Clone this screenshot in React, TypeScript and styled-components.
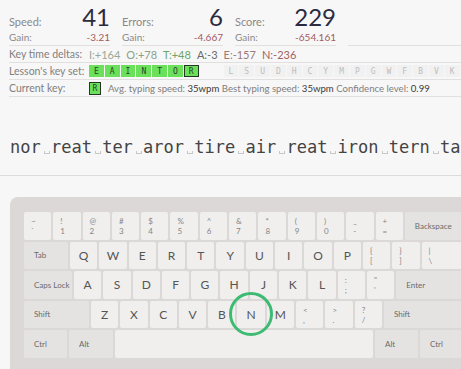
import React from 'react';
import styled, { createGlobalStyle } from 'styled-components';

const Global = createGlobalStyle`
  html, body { margin: 0; padding: 0; background: #f8f7f7; overflow: hidden; }
  body { font-family: Lato, "Noto Sans", sans-serif; }
`;

const Page = styled.div`
  width: 461px;
  height: 369px;
  overflow: hidden;
  background: #f8f7f7;
`;

const Stats = styled.div`
  display: flex;
  gap: 12px;
  padding-left: 9px;
`;

const Stat = styled.div`
  width: 101px;
  flex-shrink: 0;
`;

const StatTop = styled.div`
  display: flex;
  justify-content: space-between;
  align-items: baseline;
  padding-top: 5px;
`;

const StatLabel = styled.span`
  font-size: 11px;
  color: #8a8888;
`;

const BigNum = styled.span`
  font-size: 24px;
  line-height: 24px;
  color: #2b2b40;
`;

const GainRow = styled.div`
  display: flex;
  justify-content: space-between;
  align-items: center;
  height: 16px;
  border-bottom: 1px solid #e2dfdf;
  font-size: 10px;
  color: #8a8888;
`;

const GainValue = styled.span`
  color: #a35a5e;
`;

const Filler = styled.div`
  flex: 1;
  align-self: flex-end;
  border-bottom: 1px solid #e2dfdf;
`;

const InfoRow = styled.div`
  display: flex;
  align-items: center;
  height: 16px;
  margin-left: 9px;
  border-bottom: 1px solid #e2dfdf;
  font-size: 10.5px;
  color: #808080;
  white-space: nowrap;
`;

const InfoLabel = styled.span`
  width: 80px;
  flex-shrink: 0;
`;

const Delta = styled.span<{ $c: string }>`
  color: ${(p) => p.$c};
  margin-right: 6px;
  font-size: 11px;
`;

const KeyBox = styled.span<{ $state: 'on' | 'current' | 'off' }>`
  display: inline-flex;
  align-items: center;
  justify-content: center;
  box-sizing: border-box;
  width: 14.8px;
  height: 12px;
  margin-right: 1px;
  font-family: "DejaVu Sans Mono", monospace;
  font-size: 8px;
  background: ${(p) => (p.$state === 'off' ? '#f2f1f1' : '#6be05a')};
  color: ${(p) => (p.$state === 'off' ? '#bdbdbd' : '#2a432a')};
  border: ${(p) => (p.$state === 'current' ? '1.5px solid #263626' : 'none')};
`;

const KeyGap = styled.span`
  display: inline-block;
  width: 24px;
`;

const CurrentBox = styled(KeyBox)`
  width: 12px;
  height: 13px;
`;

const InfoText = styled.span`
  margin-left: 6px;
  font-size: 9.6px;
  color: #7e7e7e;
`;

const Strong = styled.span`
  color: #3a3a3a;
`;

const TypingArea = styled.div`
  padding: 40px 0 18px 10px;
  border-bottom: 1px solid #dedbdb;
  white-space: nowrap;
  overflow: hidden;
  font-family: "DejaVu Sans Mono", monospace;
  font-size: 17px;
  line-height: 20px;
  color: #444;
`;

const SpaceMark = styled.span`
  position: relative;
  display: inline-block;
  width: 1ch;
  &::after {
    content: '';
    position: absolute;
    left: 3px;
    bottom: 3px;
    width: 4px;
    height: 2px;
    border: 1px solid #c8c8c8;
    border-top: none;
  }
`;

const Panel = styled.div`
  margin: 21px 0 0 10px;
  padding: 15px 0 12px 14px;
  width: 480px;
  background: #dcd8d7;
  border-radius: 8px 0 0 0;
  display: flex;
  flex-direction: column;
  gap: 2px;
`;

const KeyRow = styled.div`
  display: flex;
  gap: 2px;
`;

const Key = styled.div<{ $w: number; $mod?: boolean; $target?: boolean }>`
  position: relative;
  z-index: ${(p) => (p.$target ? 2 : 'auto')};
  flex-shrink: 0;
  box-sizing: border-box;
  width: ${(p) => p.$w}px;
  height: 27.5px;
  border-radius: 2px;
  background: ${(p) => (p.$mod ? '#e5e3e2' : '#f0efee')};
  color: #555;
  &::after {
    content: '';
    display: ${(p) => (p.$target ? 'block' : 'none')};
    position: absolute;
    left: 50%;
    top: 50%;
    width: 44px;
    height: 44px;
    box-sizing: border-box;
    border: 3.5px solid #3dbb72;
    border-radius: 50%;
    transform: translate(-50%, -50%);
  }
`;

const CharLabel = styled.div`
  display: flex;
  align-items: center;
  justify-content: center;
  height: 100%;
  font-size: 12px;
  color: #555;
`;

const DualLabel = styled.div`
  display: flex;
  flex-direction: column;
  padding: 4px 0 0 7px;
  font-size: 8px;
  line-height: 10px;
  color: #858585;
`;

const ModLabel = styled.div`
  display: flex;
  align-items: center;
  height: 100%;
  padding-left: 10px;
  font-size: 8px;
  color: #6a6a6a;
`;

type K =
  | { t: 'c'; l: string; target?: boolean }
  | { t: 'd'; a: string; b: string; w?: number }
  | { t: 'm'; l: string; w: number }
  | { t: 's'; w: number };

const U = 27.3;

const rows: K[][] = [
  [
    { t: 'd', a: '~', b: '`' },
    { t: 'd', a: '!', b: '1' },
    { t: 'd', a: '@', b: '2' },
    { t: 'd', a: '#', b: '3' },
    { t: 'd', a: '$', b: '4' },
    { t: 'd', a: '%', b: '5' },
    { t: 'd', a: '^', b: '6' },
    { t: 'd', a: '&', b: '7' },
    { t: 'd', a: '*', b: '8' },
    { t: 'd', a: '(', b: '9' },
    { t: 'd', a: ')', b: '0' },
    { t: 'd', a: '_', b: '-' },
    { t: 'd', a: '+', b: '=' },
    { t: 'm', l: 'Backspace', w: 57 },
  ],
  [
    { t: 'm', l: 'Tab', w: 44 },
    ...'QWERTYUIOP'.split('').map((l) => ({ t: 'c', l } as K)),
    { t: 'd', a: '{', b: '[' },
    { t: 'd', a: '}', b: ']' },
    { t: 'd', a: '|', b: '\\', w: 42 },
  ],
  [
    { t: 'm', l: 'Caps Lock', w: 48 },
    ...'ASDFGHJKL'.split('').map((l) => ({ t: 'c', l } as K)),
    { t: 'd', a: ':', b: ';' },
    { t: 'd', a: '"', b: "'" },
    { t: 'm', l: 'Enter', w: 67 },
  ],
  [
    { t: 'm', l: 'Shift', w: 65 },
    ...'ZXCVBNM'.split('').map((l) => ({ t: 'c', l, target: l === 'N' } as K)),
    { t: 'd', a: '<', b: ',' },
    { t: 'd', a: '>', b: '.' },
    { t: 'd', a: '?', b: '/' },
    { t: 'm', l: 'Shift', w: 80 },
  ],
  [
    { t: 'm', l: 'Ctrl', w: 43 },
    { t: 'm', l: 'Alt', w: 44 },
    { t: 's', w: 258 },
    { t: 'm', l: 'Alt', w: 43 },
    { t: 'm', l: 'Ctrl', w: 44 },
  ],
];

const renderKey = (k: K, i: number) => {
  switch (k.t) {
    case 'c':
      return (
        <Key key={i} $w={U} $target={k.target}>
          <CharLabel>{k.l}</CharLabel>
        </Key>
      );
    case 'd':
      return (
        <Key key={i} $w={k.w ?? U}>
          <DualLabel>
            <span>{k.a}</span>
            <span>{k.b}</span>
          </DualLabel>
        </Key>
      );
    case 'm':
      return (
        <Key key={i} $w={k.w} $mod>
          <ModLabel>{k.l}</ModLabel>
        </Key>
      );
    default:
      return <Key key={i} $w={k.w} />;
  }
};

const stats = [
  { label: 'Speed:', value: '41', gain: '-3.21' },
  { label: 'Errors:', value: '6', gain: '-4.667' },
  { label: 'Score:', value: '229', gain: '-654.161' },
];

const deltas = [
  { t: 'I:+164', c: '#98a898' },
  { t: 'O:+78', c: '#8aa28a' },
  { t: 'T:+48', c: '#6aa66a' },
  { t: 'A:-3', c: '#6a6a6a' },
  { t: 'E:-157', c: '#9a7a7a' },
  { t: 'N:-236', c: '#a06262' },
];

const words = ['nor', 'reat', 'ter', 'aror', 'tire', 'air', 'reat', 'iron', 'tern', 'ta'];

export default function App() {
  return (
    <Page>
      <Global />
      <Stats>
        {stats.map((s) => (
          <Stat key={s.label}>
            <StatTop>
              <StatLabel>{s.label}</StatLabel>
              <BigNum>{s.value}</BigNum>
            </StatTop>
            <GainRow>
              <span>Gain:</span>
              <GainValue>{s.gain}</GainValue>
            </GainRow>
          </Stat>
        ))}
        <Filler />
      </Stats>
      <InfoRow>
        <InfoLabel>Key time deltas:</InfoLabel>
        {deltas.map((d) => (
          <Delta key={d.t} $c={d.c}>
            {d.t}
          </Delta>
        ))}
      </InfoRow>
      <InfoRow>
        <InfoLabel>Lesson's key set:</InfoLabel>
        {'EAINTO'.split('').map((l) => (
          <KeyBox key={l} $state="on">
            {l}
          </KeyBox>
        ))}
        <KeyBox $state="current">R</KeyBox>
        <KeyGap />
        {'LSUDHCYMPGWFBVK'.split('').map((l) => (
          <KeyBox key={l} $state="off">
            {l}
          </KeyBox>
        ))}
      </InfoRow>
      <InfoRow>
        <InfoLabel>Current key:</InfoLabel>
        <CurrentBox $state="current">R</CurrentBox>
        <InfoText>
          Avg. typing speed: <Strong>35wpm</Strong> Best typing speed: <Strong>35wpm</Strong> Confidence level:{' '}
          <Strong>0.99</Strong>
        </InfoText>
      </InfoRow>
      <TypingArea>
        {words.map((w, i) => (
          <React.Fragment key={i}>
            {w}
            {i < words.length - 1 && <SpaceMark>{'\u00a0'}</SpaceMark>}
          </React.Fragment>
        ))}
      </TypingArea>
      <Panel>
        {rows.map((r, ri) => (
          <KeyRow key={ri}>{r.map(renderKey)}</KeyRow>
        ))}
      </Panel>
    </Page>
  );
}
